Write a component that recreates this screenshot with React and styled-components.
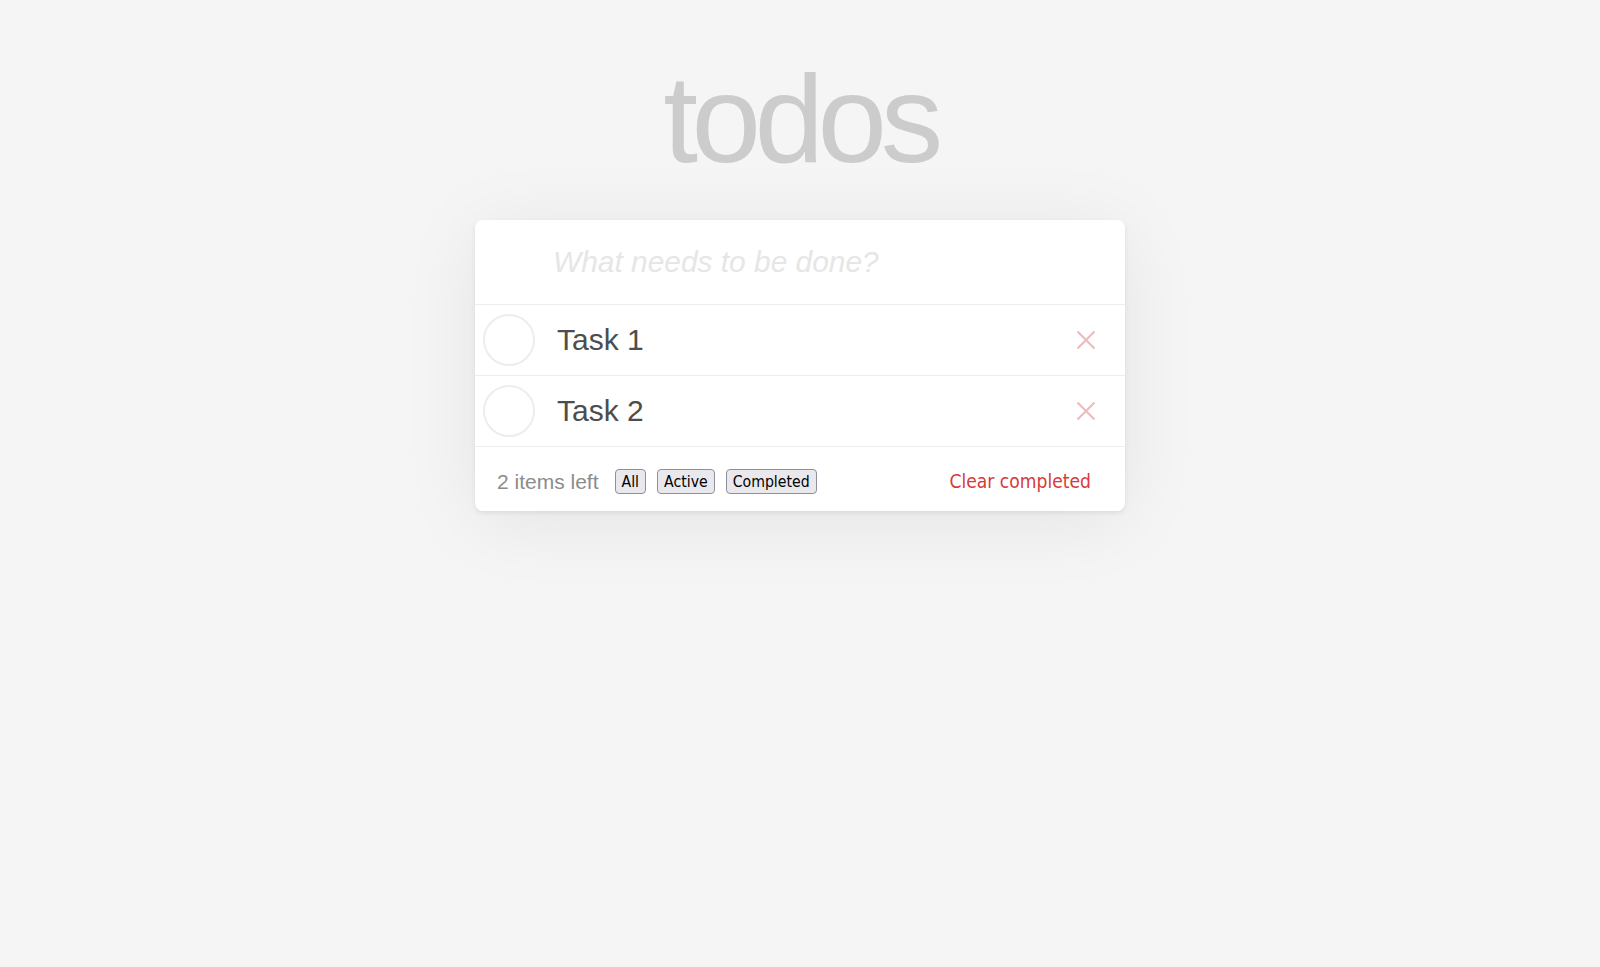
import React, { useState } from "react";
import styled, { createGlobalStyle } from "styled-components";

const GlobalStyle = createGlobalStyle`
  html, body {
    margin: 0;
    padding: 0;
    background: #f5f5f5;
    font-family: "Liberation Sans", Arial, Helvetica, sans-serif;
  }
  * { box-sizing: border-box; }
`;

const Page = styled.div`
  min-height: 967px;
  padding-top: 56px;
  display: flex;
  flex-direction: column;
  align-items: center;
`;

const Title = styled.h1`
  margin: 0 0 39px;
  font-family: "Liberation Sans", Arial, sans-serif;
  font-size: 125px;
  line-height: 125px;
  font-weight: 400;
  letter-spacing: -6.5px;
  color: #cccccc;
`;

const Card = styled.section`
  width: 650px;
  background: #ffffff;
  border-radius: 8px;
  box-shadow: 0 2px 5px rgba(0, 0, 0, 0.08), 0 10px 80px rgba(0, 0, 0, 0.07);
`;

const NewTodo = styled.input`
  display: block;
  width: 100%;
  height: 85px;
  padding: 0 20px 0 78px;
  border: none;
  border-bottom: 1px solid #ededed;
  outline: none;
  background: transparent;
  font-family: "Liberation Sans", Arial, sans-serif;
  font-size: 29.9px;
  color: #4d4d4d;
  &::placeholder {
    font-style: italic;
    color: #e6e6e6;
  }
`;

const List = styled.ul`
  list-style: none;
  margin: 0;
  padding: 0;
`;

const Item = styled.li`
  display: flex;
  align-items: center;
  height: 71px;
  border-bottom: 1px solid #ededed;
`;

const Toggle = styled.button`
  flex: none;
  width: 52px;
  height: 52px;
  margin-left: 8px;
  padding: 0;
  border-radius: 50%;
  border: 2px solid #ededed;
  background: transparent;
  cursor: pointer;
`;

const Label = styled.label`
  flex: 1;
  margin-left: 22px;
  font-size: 30px;
  line-height: 36px;
  color: #4d4d4d;
  text-decoration: ${(p) => (p.$done ? "line-through" : "none")};
`;

const Destroy = styled.button`
  flex: none;
  width: 40px;
  height: 40px;
  margin-right: 19px;
  padding: 0;
  border: none;
  background: transparent;
  display: flex;
  align-items: center;
  justify-content: center;
  cursor: pointer;
`;

const Footer = styled.footer`
  display: flex;
  align-items: center;
  height: 64px;
  padding: 5px 34px 0 22px;
`;

const Count = styled.span`
  font-size: 21px;
  color: #8c8c8c;
`;

const Filters = styled.div`
  display: flex;
  gap: 11px;
  margin-left: 16px;
`;

const FilterButton = styled.button`
  height: 25px;
  padding: 0 6px;
  border: 1px solid #8f8f9d;
  border-radius: 4px;
  background: #e9e9ed;
  color: #000;
  font-family: "DejaVu Sans Condensed", "DejaVu Sans", sans-serif;
  font-stretch: condensed;
  font-size: 15.7px;
  line-height: 23px;
  cursor: pointer;
`;

const Clear = styled.button`
  margin-left: auto;
  padding: 0;
  border: none;
  background: transparent;
  color: #d83a3a;
  font-family: "DejaVu Sans Condensed", "DejaVu Sans", sans-serif;
  font-stretch: condensed;
  font-size: 19.1px;
  cursor: pointer;
`;

const XIcon = () => (
  <svg width="20" height="20" viewBox="0 0 20 20" aria-hidden="true">
    <path d="M1.5 1.5 L18.5 18.5 M18.5 1.5 L1.5 18.5" stroke="#ebbdbd" strokeWidth="2.2" fill="none" />
  </svg>
);

export default function App() {
  const [filter, setFilter] = useState("all");
  const todos = [
    { id: 1, title: "Task 1", done: false },
    { id: 2, title: "Task 2", done: false },
  ];
  return (
    <>
      <GlobalStyle />
      <Page>
        <Title>todos</Title>
        <Card>
          <NewTodo placeholder="What needs to be done?" />
          <List>
            {todos.map((t) => (
              <Item key={t.id}>
                <Toggle aria-label="toggle" />
                <Label $done={t.done}>{t.title}</Label>
                <Destroy aria-label="delete">
                  <XIcon />
                </Destroy>
              </Item>
            ))}
          </List>
          <Footer>
            <Count>2 items left</Count>
            <Filters>
              <FilterButton $active={filter === "all"} onClick={() => setFilter("all")}>All</FilterButton>
              <FilterButton $active={filter === "active"} onClick={() => setFilter("active")}>Active</FilterButton>
              <FilterButton $active={filter === "completed"} onClick={() => setFilter("completed")}>Completed</FilterButton>
            </Filters>
            <Clear>Clear completed</Clear>
          </Footer>
        </Card>
      </Page>
    </>
  );
}
